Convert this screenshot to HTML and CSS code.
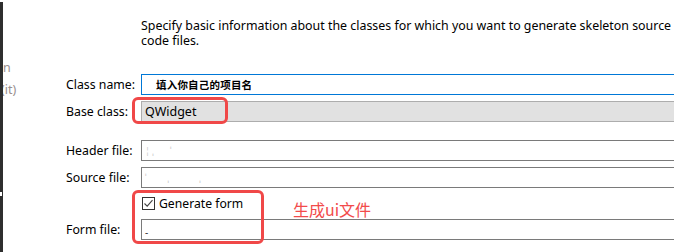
FILE: index.html
```html
<!DOCTYPE html>
<html>
<head>
<meta charset="utf-8">
<link rel="stylesheet" href="styles.css">
</head>
<body>
<div class="page">
  <div class="edge"><span class="tick tick-top"></span><span class="tick tick-mid"></span></div>
  <div class="side">
    <span class="ghost g1">n</span>
    <span class="ghost g2">(it)</span>
  </div>
  <div class="main">
    <p class="intro"><span class="line">Specify basic information about the classes for which you want to generate skeleton source</span><span class="line">code files.</span></p>
    <div class="form">
      <div class="row">
        <label class="lbl">Class name:</label>
        <div class="field active"><span class="cn">填入你自己的项目名</span></div>
      </div>
      <div class="row">
        <label class="lbl">Base class:</label>
        <div class="field readonly"><span class="val">QWidget</span></div>
      </div>
      <div class="row gap-top">
        <label class="lbl">Header file:</label>
        <div class="field"><span class="blur">¦ ˌ&nbsp;&nbsp;&nbsp;&nbsp;&nbsp;&nbsp;&nbsp;ˈ</span></div>
      </div>
      <div class="row">
        <label class="lbl">Source file:</label>
        <div class="field"><span class="blur">ˈ&nbsp;&nbsp;&nbsp;&nbsp;&nbsp;&nbsp;&nbsp;&nbsp;&nbsp;ˌ&nbsp;&nbsp;&nbsp;&nbsp;&nbsp;&nbsp;&nbsp;&nbsp;&nbsp;&nbsp;&nbsp;&nbsp;&nbsp;ˌ</span></div>
      </div>
      <div class="row check-row">
        <span class="lbl"></span>
        <span class="box"><svg width="11" height="11" viewBox="0 0 11 11"><path d="M1.5 5.5 L4.2 8.2 L9.5 2.2" fill="none" stroke="#444" stroke-width="1.1"/></svg></span>
        <span class="check-text">Generate form</span>
      </div>
      <div class="row">
        <label class="lbl">Form file:</label>
        <div class="field"><span class="dot">-</span></div>
      </div>
    </div>
  </div>
  <div class="mark mark-base"></div>
  <div class="mark mark-form"></div>
  <div class="note">生成ui文件</div>
</div>
</body>
</html>
```
FILE: styles.css
```css
html, body {
  margin: 0;
  padding: 0;
  background: #ffffff;
}
.page {
  position: relative;
  width: 680px;
  height: 252px;
  overflow: hidden;
  display: flex;
  font-family: "Noto Sans", "Open Sans", sans-serif;
  font-size: 12px;
  color: #000;
}
.edge {
  position: relative;
  width: 3px;
  flex-shrink: 0;
  background: #2e2e2e;
}
.tick {
  position: absolute;
  left: 0;
  background: #ffffff;
}
.tick-top { top: 0; width: 3px; height: 2px; }
.tick-mid { top: 192px; width: 2px; height: 4px; }
.side {
  width: 63px;
  flex-shrink: 0;
  display: flex;
  flex-direction: column;
  align-items: flex-start;
  padding-top: 60px;
  box-sizing: border-box;
}
.ghost {
  color: #9a9090;
  line-height: 15px;
  font-size: 12.5px;
}
.g2 { margin-top: 7px; margin-left: -2px; }
.main {
  flex: 1;
  min-width: 0;
  display: flex;
  flex-direction: column;
}
.intro {
  margin: 0 0 0 75px;
  padding-top: 18px;
  white-space: nowrap;
  display: flex;
  flex-direction: column;
  font-size: 12.4px;
}
.line {
  display: block;
  height: 15px;
  line-height: 15px;
}
.form {
  margin-top: 26px;
  display: flex;
  flex-direction: column;
  gap: 6px;
}
.row {
  display: flex;
  align-items: center;
  height: 21px;
}
.gap-top { margin-top: 12px; }
.lbl {
  width: 75px;
  flex-shrink: 0;
  line-height: 15px;
  white-space: nowrap;
  font-size: 12.3px;
}
.field {
  box-sizing: border-box;
  width: 533px;
  flex-shrink: 0;
  height: 21px;
  border: 1px solid #7a7a7a;
  border-right: none;
  display: flex;
  align-items: center;
  padding-left: 3px;
  background: #fff;
}
.field.active { border-color: #0078d7; }
.field.readonly {
  background: #e1e1e1;
  border-color: #adadad;
}
.cn {
  font-family: "Noto Sans CJK SC", sans-serif;
  font-weight: bold;
  font-size: 10.5px;
  letter-spacing: 0.2px;
  margin-left: 11px;
}
.val { font-size: 12.5px; }
.blur {
  color: #c9c9c9;
  font-size: 9px;
  white-space: pre;
}
.dot {
  color: #333;
  font-size: 10px;
  margin-top: 4px;
}
.check-row {
  height: 19px;
}
.box {
  box-sizing: border-box;
  width: 13px;
  height: 13px;
  margin-left: 1px;
  margin-right: 4px;
  border: 1px solid #333;
  display: flex;
  align-items: center;
  justify-content: center;
  background: #fff;
}
.check-text { line-height: 15px; font-size: 12.2px; }
.mark {
  position: absolute;
  box-sizing: border-box;
  border: 3px solid #f04848;
  border-radius: 6px;
}
.mark-base { left: 132px; top: 97px; width: 96px; height: 27px; }
.mark-form { left: 132px; top: 190px; width: 132px; height: 54px; }
.note {
  position: absolute;
  left: 293px;
  top: 200px;
  font-family: "Noto Sans CJK SC", sans-serif;
  font-size: 16px;
  line-height: 18px;
  color: #f24b4b;
}
```
